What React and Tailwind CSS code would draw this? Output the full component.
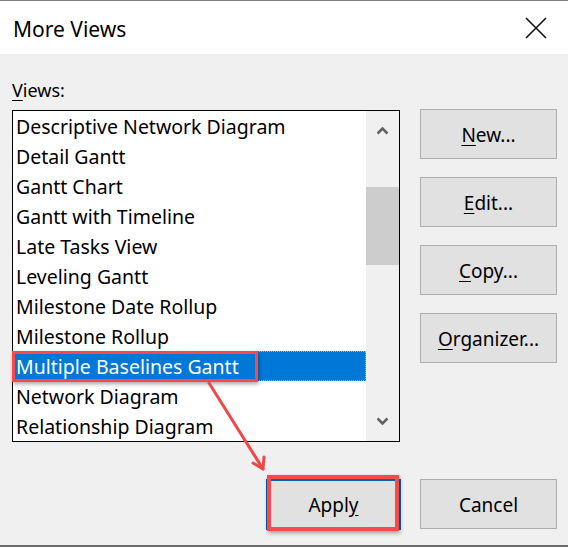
import React from "react";

const font = { fontFamily: '"Noto Sans", "Open Sans", sans-serif' };

const views = [
  "Descriptive Network Diagram",
  "Detail Gantt",
  "Gantt Chart",
  "Gantt with Timeline",
  "Late Tasks View",
  "Leveling Gantt",
  "Milestone Date Rollup",
  "Milestone Rollup",
  "Multiple Baselines Gantt",
  "Network Diagram",
  "Relationship Diagram",
];

const SELECTED = 8;

const Key = ({ children }) => <span className="underline underline-offset-[3px]">{children}</span>;

const SideButton = ({ children }) => (
  <button className="h-[50px] w-[137px] border border-[#adadad] bg-[#e1e1e1] pt-[2px] text-[19px] text-black">
    {children}
  </button>
);

export default function App() {
  return (
    <div
      className="relative h-[547px] w-[568px] overflow-hidden border-t border-[#7f7f7f] bg-[#f0f0f0]"
      style={font}
    >
      {/* title bar */}
      <div className="flex h-[53px] items-center justify-between bg-white pl-[13px] pr-[21px]">
        <span className="pt-[3px] text-[21px] leading-none text-black">More Views</span>
        <svg width="22" height="22" viewBox="0 0 22 22">
          <path d="M1 1 L21 21 M21 1 L1 21" stroke="#111" strokeWidth="1.6" />
        </svg>
      </div>

      {/* body */}
      <div className="flex h-[493px] flex-col border-b-2 border-[#6d6d6d] pl-[12px] pr-[11px] pt-[22px]">
        <div className="flex gap-[20px]">
          <div className="flex w-[388px] flex-col">
            <div className="mb-[10px] h-[24px] pt-[2px] pl-[-2px] text-[18px] leading-[24px] text-black">
              <Key>V</Key>iews:
            </div>
            <div className="flex h-[332px] border border-black bg-white">
              <div className="flex flex-1 flex-col">
                {views.map((v, i) => (
                  <div
                    key={v}
                    className={
                      i === SELECTED
                        ? "h-[30px] border border-dotted border-[#f0b050] bg-[#0078d7] pl-[2px] pt-[1px] text-[19.5px] leading-[28px] text-white whitespace-nowrap"
                        : "h-[30px] pl-[3px] pt-[2px] text-[19.5px] leading-[28px] text-black whitespace-nowrap"
                    }
                  >
                    {v}
                  </div>
                ))}
              </div>
              <div className="relative w-[33px] bg-[#f0f0f0]">
                <svg className="absolute left-[11px] top-[16px]" width="11" height="8" viewBox="0 0 11 8">
                  <path d="M0.5 6.5 L5.5 1.5 L10.5 6.5" stroke="#606060" strokeWidth="2.6" fill="none" />
                </svg>
                <div className="absolute left-0 right-0 top-[76px] h-[78px] bg-[#cdcdcd]" />
                <svg className="absolute bottom-[16px] left-[11px]" width="11" height="8" viewBox="0 0 11 8">
                  <path d="M0.5 1.5 L5.5 6.5 L10.5 1.5" stroke="#606060" strokeWidth="2.6" fill="none" />
                </svg>
              </div>
            </div>
          </div>

          <div className="flex flex-col gap-[18px] pt-[33px]">
            <SideButton>
              <Key>N</Key>ew...
            </SideButton>
            <SideButton>
              <Key>E</Key>dit...
            </SideButton>
            <SideButton>
              <Key>C</Key>opy...
            </SideButton>
            <SideButton>
              <Key>O</Key>rganizer...
            </SideButton>
          </div>
        </div>

        <div className="mt-[37px] flex justify-end gap-[19px]">
          <button className="h-[51px] w-[135px] border-2 border-[#0063b1] bg-[#e1e1e1] pt-[2px] text-[19px] text-black">
            Appl<Key>y</Key>
          </button>
          <button className="h-[50px] w-[137px] border border-[#adadad] bg-[#e1e1e1] pt-[2px] text-[19px] text-black">
            Cancel
          </button>
        </div>
      </div>

      {/* annotation overlays */}
      <div className="absolute left-[12px] top-[350px] h-[31px] w-[246px] border-[3px] border-[#fb4848] shadow-[1px_2px_4px_rgba(0,0,0,0.35)]" />
      <div className="absolute left-[267px] top-[474px] h-[56px] w-[132px] border-[4px] border-[#fb4848] shadow-[1px_2px_4px_rgba(0,0,0,0.35)]" />
      <svg className="absolute left-0 top-0" width="568" height="547" viewBox="0 0 568 547">
        <g stroke="#f04848" strokeWidth="3" fill="none" strokeLinecap="round">
          <path d="M209 382 L263 468" />
          <path d="M263 468 L253 462 M263 468 L264 456" />
        </g>
      </svg>
    </div>
  );
}
